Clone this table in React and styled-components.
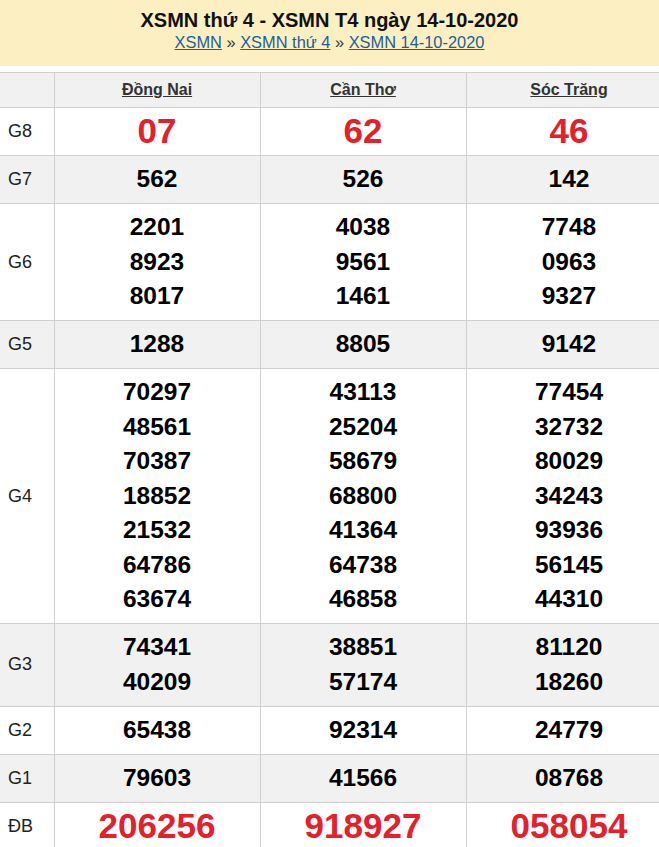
import React from "react";
import styled, { createGlobalStyle } from "styled-components";

const Global = createGlobalStyle`
  html, body { margin: 0; padding: 0; background: #fff; overflow-x: hidden; }
  body { font-family: "Liberation Sans", Arial, sans-serif; }
`;

const narrow = `"Liberation Sans Narrow", "Arial Narrow", "Liberation Sans", Arial, sans-serif`;

const Page = styled.div`
  width: 659px;
  overflow: hidden;
`;

const Header = styled.div`
  background: #fcf0c2;
  text-align: center;
  padding: 8px 0 14px;
  margin-bottom: 6px;
  font-family: ${narrow};
`;

const Title = styled.h1`
  margin: 0;
  font-size: 20px;
  line-height: 24px;
  font-weight: bold;
  color: #111;
`;

const Crumbs = styled.div`
  font-size: 16.4px;
  line-height: 20px;
  color: #333;
`;

const Crumb = styled.a`
  color: #1d5e9c;
  text-decoration: underline;
`;

const Table = styled.table`
  width: 672px;
  table-layout: fixed;
  border-collapse: collapse;
  font-family: "Liberation Sans", Arial, sans-serif;
`;

const Row = styled.tr`
  background: ${(p) => (p.$alt ? "#f1f1f1" : "#fff")};
`;

const HeadCell = styled.th`
  border: 1px solid #d0d0d0;
  border-left: ${(p) => (p.$first ? "none" : "1px solid #d0d0d0")};
  height: 34px;
  padding: 0;
  font-family: ${narrow};
  font-size: 16px;
  font-weight: bold;
  color: #333;
  text-align: center;
  vertical-align: middle;
  text-decoration: underline;
`;

const Label = styled.td`
  border: 1px solid #d0d0d0;
  border-left: none;
  padding: 0 0 0 8px;
  font-size: 18px;
  color: #222;
  vertical-align: middle;
`;

const Cell = styled.td`
  border: 1px solid #d0d0d0;
  padding: 6px 0 6.5px;
  text-align: center;
  vertical-align: middle;
`;

const Num = styled.div`
  font-weight: bold;
  font-size: ${(p) => (p.$big ? "35px" : "24.5px")};
  line-height: 34.5px;
  color: ${(p) => (p.$big ? "#e3202b" : "#000")};
`;

const provinces = ["Đồng Nai", "Cần Thơ", "Sóc Trăng"];

const rows = [
  { label: "G8", big: true, data: [["07"], ["62"], ["46"]] },
  { label: "G7", data: [["562"], ["526"], ["142"]] },
  {
    label: "G6",
    data: [
      ["2201", "8923", "8017"],
      ["4038", "9561", "1461"],
      ["7748", "0963", "9327"],
    ],
  },
  { label: "G5", data: [["1288"], ["8805"], ["9142"]] },
  {
    label: "G4",
    data: [
      ["70297", "48561", "70387", "18852", "21532", "64786", "63674"],
      ["43113", "25204", "58679", "68800", "41364", "64738", "46858"],
      ["77454", "32732", "80029", "34243", "93936", "56145", "44310"],
    ],
  },
  {
    label: "G3",
    data: [
      ["74341", "40209"],
      ["38851", "57174"],
      ["81120", "18260"],
    ],
  },
  { label: "G2", data: [["65438"], ["92314"], ["24779"]] },
  { label: "G1", data: [["79603"], ["41566"], ["08768"]] },
  { label: "ĐB", big: true, data: [["206256"], ["918927"], ["058054"]] },
];

export default function App() {
  return (
    <Page>
      <Global />
      <Header>
        <Title>XSMN thứ 4 - XSMN T4 ngày 14-10-2020</Title>
        <Crumbs>
          <Crumb>XSMN</Crumb> » <Crumb>XSMN thứ 4</Crumb> »{" "}
          <Crumb>XSMN 14-10-2020</Crumb>
        </Crumbs>
      </Header>
      <Table>
        <colgroup>
          <col style={{ width: 54 }} />
          <col style={{ width: 206 }} />
          <col style={{ width: 206 }} />
          <col style={{ width: 206 }} />
        </colgroup>
        <thead>
          <Row $alt>
            <HeadCell $first />
            {provinces.map((p) => (
              <HeadCell key={p}>{p}</HeadCell>
            ))}
          </Row>
        </thead>
        <tbody>
          {rows.map((r, i) => (
            <Row key={r.label} $alt={i % 2 === 1}>
              <Label>{r.label}</Label>
              {r.data.map((nums, j) => (
                <Cell key={j}>
                  {nums.map((n, k) => (
                    <Num key={k} $big={r.big}>
                      {n}
                    </Num>
                  ))}
                </Cell>
              ))}
            </Row>
          ))}
        </tbody>
      </Table>
    </Page>
  );
}
